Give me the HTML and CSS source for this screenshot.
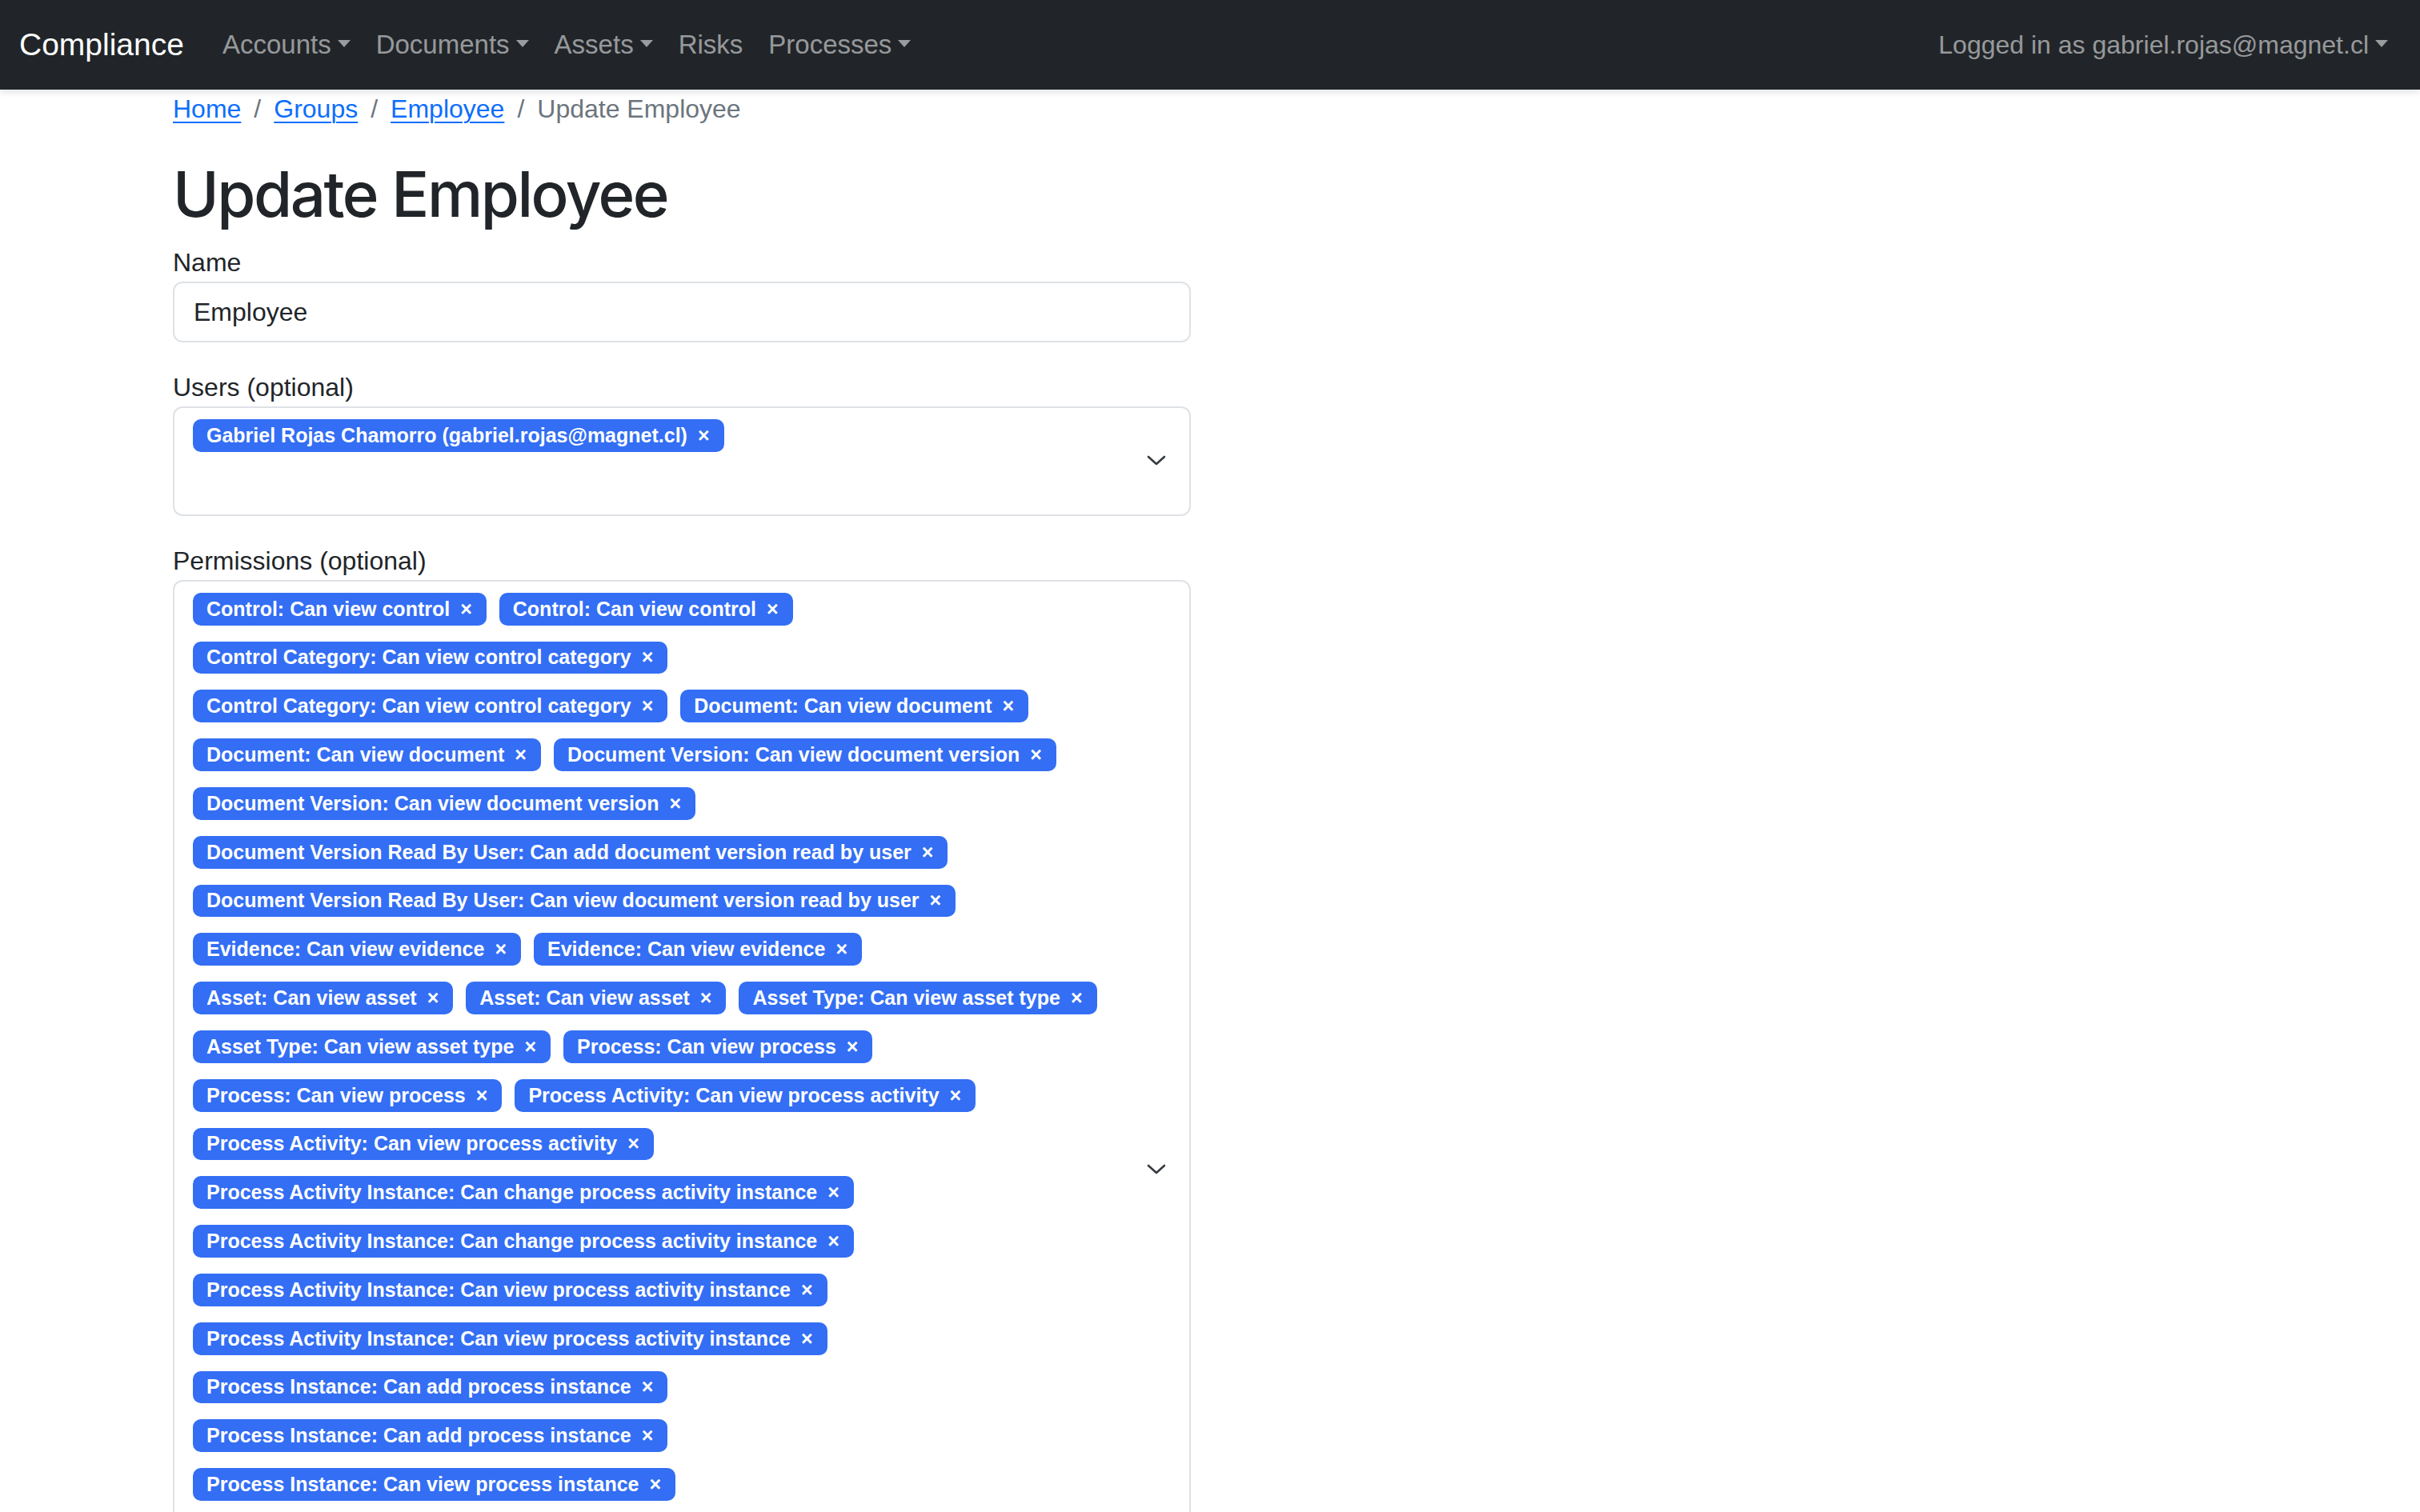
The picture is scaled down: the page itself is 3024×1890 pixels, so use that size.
FILE: index.html
```html
<!DOCTYPE html>
<html lang="en">
<head>
<meta charset="utf-8">
<title>Update Employee</title>
<link rel="stylesheet" href="styles.css">
</head>
<body>
<nav class="navbar">
  <a class="brand" href="#">Compliance</a>
  <ul class="nav nav-main">
    <li><a class="nav-link dropdown" href="#">Accounts</a></li>
    <li><a class="nav-link dropdown" href="#">Documents</a></li>
    <li><a class="nav-link dropdown" href="#">Assets</a></li>
    <li><a class="nav-link" href="#">Risks</a></li>
    <li><a class="nav-link dropdown" href="#">Processes</a></li>
  </ul>
  <ul class="nav nav-right">
    <li><a class="nav-link dropdown" href="#">Logged in as gabriel.rojas@magnet.cl</a></li>
  </ul>
</nav>

<main class="container">
  <ol class="breadcrumb">
    <li><a href="#">Home</a></li>
    <li class="sep">/</li>
    <li><a href="#">Groups</a></li>
    <li class="sep">/</li>
    <li><a href="#">Employee</a></li>
    <li class="sep">/</li>
    <li class="active">Update Employee</li>
  </ol>

  <h1 class="title">Update Employee</h1>

  <form class="form">
    <div class="field">
      <label class="label">Name</label>
      <input class="input" type="text" value="Employee">
    </div>

    <div class="field">
      <label class="label">Users (optional)</label>
      <div class="multi">
        <div class="chips">
          <span class="chip">Gabriel Rojas Chamorro (gabriel.rojas@magnet.cl)<span class="x">×</span></span>
        </div>
        <svg class="chev" viewBox="0 0 24 14" width="24" height="14"><path d="M2 2 L12 11 L22 2" fill="none" stroke="#343a40" stroke-width="2.6" stroke-linecap="round" stroke-linejoin="round"/></svg>
      </div>
    </div>

    <div class="field">
      <label class="label">Permissions (optional)</label>
      <div class="multi">
        <div class="chips">
          <span class="chip">Control: Can view control<span class="x">×</span></span>
          <span class="chip">Control: Can view control<span class="x">×</span></span>
          <span class="chip">Control Category: Can view control category<span class="x">×</span></span>
          <span class="chip">Control Category: Can view control category<span class="x">×</span></span>
          <span class="chip">Document: Can view document<span class="x">×</span></span>
          <span class="chip">Document: Can view document<span class="x">×</span></span>
          <span class="chip">Document Version: Can view document version<span class="x">×</span></span>
          <span class="chip">Document Version: Can view document version<span class="x">×</span></span>
          <span class="chip">Document Version Read By User: Can add document version read by user<span class="x">×</span></span>
          <span class="chip">Document Version Read By User: Can view document version read by user<span class="x">×</span></span>
          <span class="chip">Evidence: Can view evidence<span class="x">×</span></span>
          <span class="chip">Evidence: Can view evidence<span class="x">×</span></span>
          <span class="chip">Asset: Can view asset<span class="x">×</span></span>
          <span class="chip">Asset: Can view asset<span class="x">×</span></span>
          <span class="chip">Asset Type: Can view asset type<span class="x">×</span></span>
          <span class="chip">Asset Type: Can view asset type<span class="x">×</span></span>
          <span class="chip">Process: Can view process<span class="x">×</span></span>
          <span class="chip">Process: Can view process<span class="x">×</span></span>
          <span class="chip">Process Activity: Can view process activity<span class="x">×</span></span>
          <span class="chip">Process Activity: Can view process activity<span class="x">×</span></span>
          <span class="chip">Process Activity Instance: Can change process activity instance<span class="x">×</span></span>
          <span class="chip">Process Activity Instance: Can change process activity instance<span class="x">×</span></span>
          <span class="chip">Process Activity Instance: Can view process activity instance<span class="x">×</span></span>
          <span class="chip">Process Activity Instance: Can view process activity instance<span class="x">×</span></span>
          <span class="chip">Process Instance: Can add process instance<span class="x">×</span></span>
          <span class="chip">Process Instance: Can add process instance<span class="x">×</span></span>
          <span class="chip">Process Instance: Can view process instance<span class="x">×</span></span>
          <span class="chip">Process Instance: Can view process instance<span class="x">×</span></span>
          <span class="chip">Risk Assessment: Can view risk assessment and treatment<span class="x">×</span></span>
          <span class="chip">Risk Assessment: Can view risk assessment and treatment<span class="x">×</span></span>
          <span class="chip">Risk Category: Can view risk category and related risks<span class="x">×</span></span>
        </div>
        <svg class="chev" viewBox="0 0 24 14" width="24" height="14"><path d="M2 2 L12 11 L22 2" fill="none" stroke="#343a40" stroke-width="2.6" stroke-linecap="round" stroke-linejoin="round"/></svg>
      </div>
    </div>
  </form>
</main>
</body>
</html>
```

FILE: styles.css
```css
* { box-sizing: border-box; }

html, body {
  margin: 0;
  padding: 0;
  background: #fff;
}

body {
  font-family: "Liberation Sans", Arial, sans-serif;
  font-size: 32px;
  line-height: 1.5;
  color: #212529;
}

a { text-decoration: none; }

/* NAVBAR */
.navbar {
  display: flex;
  align-items: center;
  height: 112px;
  padding: 16px 24px;
  background: #212529;
  box-shadow: 0 3px 8px rgba(0, 0, 0, 0.12);
}

.brand {
  font-size: 39px;
  line-height: 60px;
  color: #fff;
  margin-right: 32px;
}

.nav {
  display: flex;
  list-style: none;
  margin: 0;
  padding: 0;
}

.nav-main { font-size: 33px; }

.nav-right { margin-left: auto; }

.nav-link {
  display: block;
  padding: 16px;
  line-height: 48px;
  color: rgba(255, 255, 255, 0.55);
}

.dropdown::after {
  content: "";
  display: inline-block;
  margin-left: 8px;
  vertical-align: 8px;
  border-top: 9px solid;
  border-left: 8px solid transparent;
  border-right: 8px solid transparent;
}

/* CONTAINER */
.container {
  width: 2640px;
  margin: 0 auto;
  padding: 0 24px;
}

.breadcrumb {
  display: flex;
  list-style: none;
  margin: 0 0 32px;
  padding: 0;
  line-height: 48px;
}

.breadcrumb a {
  color: #0d6efd;
  text-decoration: underline;
  text-underline-offset: 5px;
  text-decoration-thickness: 2px;
}

.breadcrumb .sep {
  color: #6c757d;
  padding: 0 16px;
}

.breadcrumb .active { color: #6c757d; }

.title {
  font-family: "Inter", "Liberation Sans", sans-serif;
  font-size: 78px;
  font-weight: 500;
  line-height: 90px;
  padding-top: 6px;
  margin: 0 0 16px;
  letter-spacing: -2.5px;
}

.form { width: 1272px; }

.field { margin-bottom: 32px; }

.label {
  display: inline-block;
  line-height: 48px;
}

.input {
  display: block;
  width: 100%;
  height: 76px;
  padding: 12px 24px;
  font-family: inherit;
  font-size: 32px;
  line-height: 48px;
  color: #212529;
  border: 2px solid #dee2e6;
  border-radius: 12px;
  background: #fff;
}

.multi {
  position: relative;
  min-height: 136px;
  padding: 14px 98px 78px 23px;
  border: 2px solid #dee2e6;
  border-radius: 12px;
  background: #fff;
}

.chips {
  display: flex;
  flex-wrap: wrap;
  gap: 20px 16px;
  align-items: flex-start;
}

.chip {
  display: inline-flex;
  align-items: center;
  height: 40.8px;
  padding: 0 18px 0 17px;
  font-size: 25px;
  font-weight: 700;
  line-height: 25px;
  color: #fff;
  background: #336ef4;
  border-radius: 10px;
  white-space: nowrap;
}

.x {
  margin-left: 13px;
  font-size: 25px;
}

.chev {
  position: absolute;
  right: 29px;
  top: 50%;
  margin-top: -7px;
}
```
